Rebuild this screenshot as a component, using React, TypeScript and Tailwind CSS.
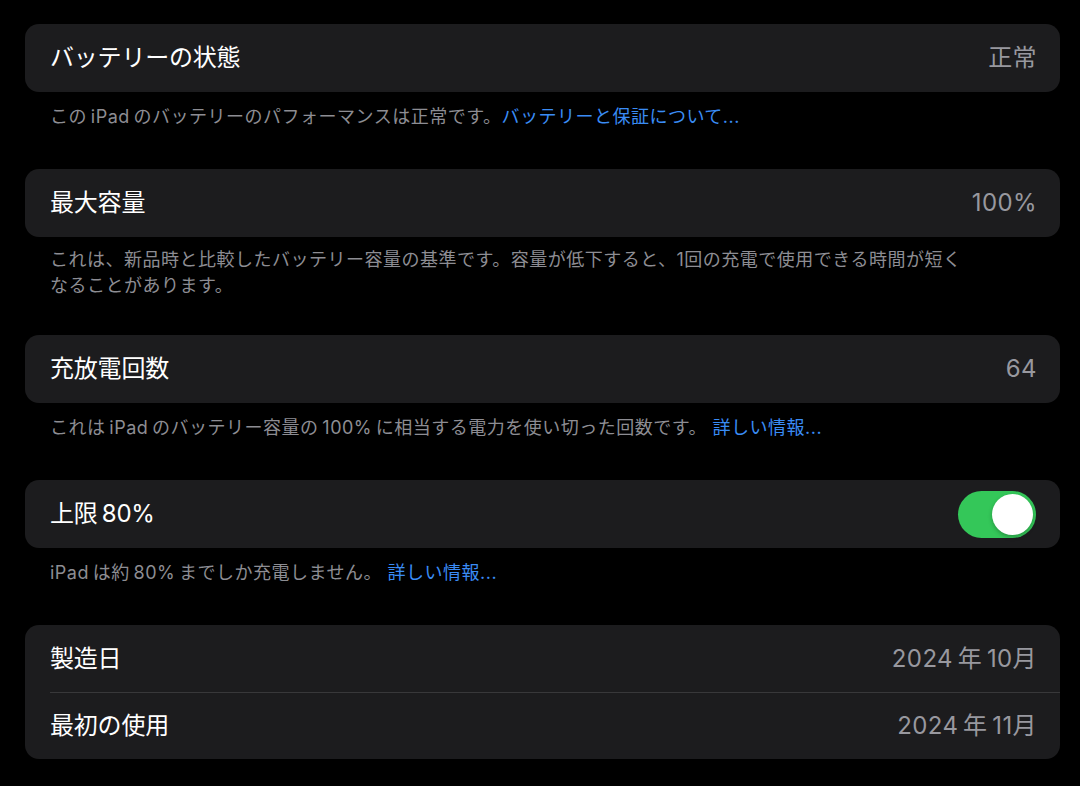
import { ReactNode } from "react"

const font = { fontFamily: 'Inter, "Noto Sans CJK JP", sans-serif' }

function Row({ label, value, toggle, h = "h-[68px]" }: { label: string; value?: string; toggle?: boolean; h?: string }) {
  return (
    <div className={`flex items-center justify-between ${h} pl-[25px] pr-[23px]`}>
      <span className="text-[24px] text-white tracking-[-0.2px]">{label}</span>
      {toggle ? (
        <div className="w-[78px] h-[47px] rounded-full bg-[#34c759] flex items-center justify-end pr-[3px] mr-[1px]">
          <div className="w-[41px] h-[41px] rounded-full bg-white shadow-[0_2px_4px_rgba(0,0,0,0.25)]" />
        </div>
      ) : (
        <span className="text-[24px] tracking-[0.4px] text-[#98989f]">{value}</span>
      )}
    </div>
  )
}

function Card({ children }: { children: ReactNode }) {
  return <div className="bg-[#1c1c1e] rounded-[14px] overflow-hidden">{children}</div>
}

function Footer({ children }: { children: ReactNode }) {
  return (
    <p className="pl-[25px] pt-[12px] pb-[39px] text-[18px] tracking-[0.5px] leading-[26px] text-[#8d8d93]">
      {children}
    </p>
  )
}

function Link({ children }: { children: ReactNode }) {
  return <span className="text-[#3a8cf5]">{children}</span>
}

export default function App() {
  return (
    <div className="w-[1080px] h-[786px] bg-black overflow-hidden" style={font}>
      <div className="pt-[24px] pl-[25px] pr-[20px]">
        <Card>
          <Row label="バッテリーの状態" value="正常" />
        </Card>
        <Footer>
          この{"\u2009"}iPad{"\u2009"}のバッテリーのパフォーマンスは正常です。<Link>バッテリーと保証について...</Link>
        </Footer>

        <Card>
          <Row label="最大容量" value="100%" />
        </Card>
        <p className="pl-[25px] pt-[10px] pb-[36px] text-[18px] tracking-[0.5px] leading-[26px] text-[#8d8d93] max-w-[950px]">
          これは、新品時と比較したバッテリー容量の基準です。容量が低下すると、1回の充電で使用できる時間が短く<br />
          なることがあります。
        </p>

        <Card>
          <Row label="充放電回数" value="64" />
        </Card>
        <Footer>
          これは{"\u2009"}iPad{"\u2009"}のバッテリー容量の{"\u2009"}100%{"\u2009"}に相当する電力を使い切った回数です。 <Link>詳しい情報...</Link>
        </Footer>

        <Card>
          <Row label={"上限\u200980%"} toggle />
        </Card>
        <Footer>
          iPad{"\u2009"}は約{"\u2009"}80%{"\u2009"}までしか充電しません。 <Link>詳しい情報...</Link>
        </Footer>

        <Card>
          <Row label="製造日" value={"2024\u2009年\u200910月"} h="h-[67px]" />
          <div className="ml-[25px] h-px bg-[#38383a]" />
          <Row label="最初の使用" value={"2024\u2009年\u200911月"} h="h-[66px]" />
        </Card>
      </div>
    </div>
  )
}
